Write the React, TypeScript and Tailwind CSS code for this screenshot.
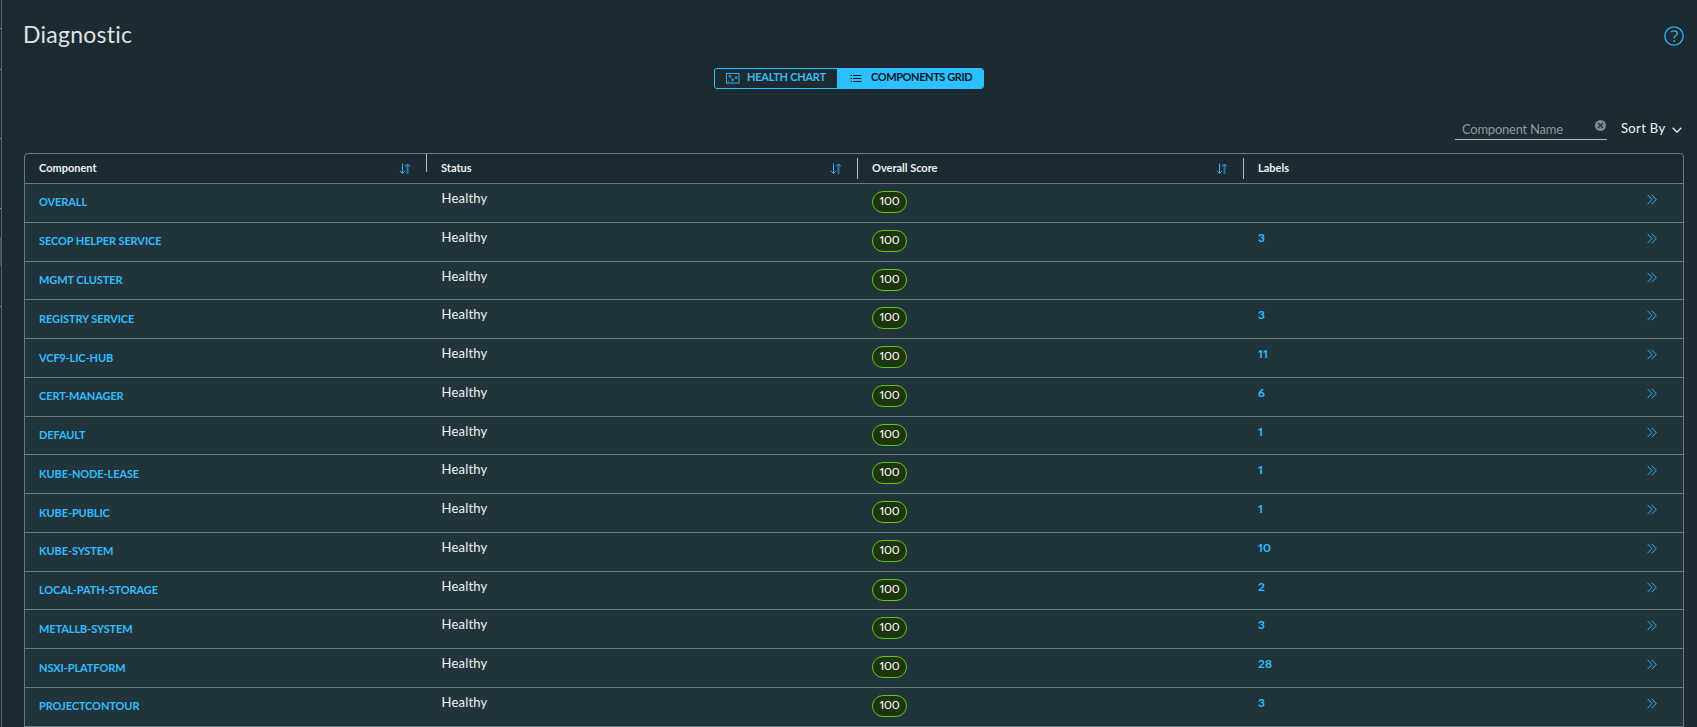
import { useState } from "react";
import clsx from "clsx";

type ComponentRow = {
  name: string;
  status: string;
  score: number;
  labels?: number;
};

const rows: ComponentRow[] = [
  { name: "OVERALL", status: "Healthy", score: 100 },
  { name: "SECOP HELPER SERVICE", status: "Healthy", score: 100, labels: 3 },
  { name: "MGMT CLUSTER", status: "Healthy", score: 100 },
  { name: "REGISTRY SERVICE", status: "Healthy", score: 100, labels: 3 },
  { name: "VCF9-LIC-HUB", status: "Healthy", score: 100, labels: 11 },
  { name: "CERT-MANAGER", status: "Healthy", score: 100, labels: 6 },
  { name: "DEFAULT", status: "Healthy", score: 100, labels: 1 },
  { name: "KUBE-NODE-LEASE", status: "Healthy", score: 100, labels: 1 },
  { name: "KUBE-PUBLIC", status: "Healthy", score: 100, labels: 1 },
  { name: "KUBE-SYSTEM", status: "Healthy", score: 100, labels: 10 },
  { name: "LOCAL-PATH-STORAGE", status: "Healthy", score: 100, labels: 2 },
  { name: "METALLB-SYSTEM", status: "Healthy", score: 100, labels: 3 },
  { name: "NSXI-PLATFORM", status: "Healthy", score: 100, labels: 28 },
  { name: "PROJECTCONTOUR", status: "Healthy", score: 100, labels: 3 },
];

const columns = "grid grid-cols-[401px_431px_386px_1fr]";

function SortIcon() {
  return (
    <svg width="12" height="12" viewBox="0 0 12 12" fill="none" stroke="#2cb5f2" className="mt-[9px] mr-[15px]">
      <path d="M3.5 0.5v10M0.8 7.8L3.5 10.5L6 8" />
      <path d="M8.5 11V2" strokeWidth="2" opacity="0.55" />
      <path d="M6 3.5L8.5 1L11 3.5" />
    </svg>
  );
}

function ChartIcon() {
  return (
    <svg width="14" height="12" viewBox="0 0 14 12" fill="none" stroke="currentColor" strokeWidth="0.9" className="-mt-px">
      <rect x="0.5" y="1.5" width="12.5" height="9.5" />
      <circle cx="3.9" cy="4.3" r="1.1" />
      <circle cx="6.7" cy="8" r="0.9" />
      <circle cx="10.3" cy="5.6" r="1" />
      <path d="M4.9 5.8L5.6 6.6M8.3 7.4L8.9 6.8M2.3 9.2h1" />
    </svg>
  );
}

function ListIcon() {
  return (
    <svg width="12" height="9" viewBox="0 0 12 9" fill="none" stroke="currentColor" strokeWidth="1">
      <path d="M0.5 1.5h1.5M0.5 4.5h1.5M0.5 7.5h1.5M3 1.5h8.5M3 4.5h8.5M3 7.5h8.5" />
    </svg>
  );
}

function HelpIcon() {
  return (
    <svg width="20" height="20" viewBox="0 0 20 20" fill="none" stroke="#2cb5f2">
      <circle cx="10" cy="10" r="9.2" strokeWidth="1.3" />
      <path d="M6.9 6.1c.8-.9 1.9-1.3 3.1-1.3 1.9 0 3.2 1 3.2 2.6 0 1.3-.8 2-1.8 2.6-.9.5-1.3 1-1.3 1.8v.8" strokeWidth="1.3" />
      <circle cx="10.1" cy="15" r="0.9" fill="#2cb5f2" stroke="none" />
    </svg>
  );
}

function HeaderCell({ label, sortable = true, first = false }: { label: string; sortable?: boolean; first?: boolean }) {
  return (
    <div className="flex justify-between">
      <div className="flex">
        {!first && (
          <span className={clsx("w-px bg-[#b3bcc0]", label === "Status" ? "h-[18px]" : "mt-1 h-[21px]")} />
        )}
        <span className="pl-3.5 pt-[5.5px] text-[11px] leading-4 font-bold text-[#eaf0f2]">{label}</span>
      </div>
      {sortable && <SortIcon />}
    </div>
  );
}

// edge of the collapsed navigation panel
function NavEdge() {
  return (
    <div className="flex w-0.5 shrink-0 flex-col border-r border-[#51626a]">
      <span className="mt-7 h-px bg-[#82939b]" />
      <span className="mt-10 h-px bg-[#82939b]" />
      <span className="mt-[68px] h-px bg-[#82939b]" />
      <span className="mt-[69px] h-px bg-[#82939b]" />
      <span className="mt-7 h-[29px] bg-[#43525a]" />
      <span className="mt-10 h-px bg-[#82939b]" />
    </div>
  );
}

export default function App() {
  const [view, setView] = useState("grid");
  const [search, setSearch] = useState("");

  return (
    <div className="flex h-[727px] w-[1697px] overflow-hidden bg-[#1c2b32] font-['Lato','Liberation_Sans',sans-serif] text-white proportional-nums">
      <NavEdge />
      <main className="flex flex-1 flex-col pl-[22px] pr-[13px]">
        <header className="flex h-[68px] shrink-0 justify-between">
          <h1 className="-ml-px pt-5 text-[23px] leading-7 tracking-[0.25px] text-[#dde4e7]">Diagnostic</h1>
          <button className="mt-[26px] h-5">
            <HelpIcon />
          </button>
        </header>

        <div className="ml-[690px] flex h-[21px] w-[270px] shrink-0 overflow-hidden rounded-[3px] border border-[#2cc0ff] text-[11px] leading-4 font-bold">
          <button
            onClick={() => setView("chart")}
            className={clsx(
              "flex w-[122px] items-center pl-[11px]",
              view === "chart" ? "bg-[#2cc0ff] text-black" : "text-[#37bcf8]",
            )}
          >
            <ChartIcon />
            <span className="-mt-[3px] ml-[7px] tracking-[-0.25px] whitespace-nowrap">HEALTH CHART</span>
          </button>
          <button
            onClick={() => setView("grid")}
            className={clsx(
              "flex flex-1 items-center pl-[13px]",
              view === "grid" ? "bg-[#2cc0ff] text-[#041a24]" : "text-[#37bcf8]",
            )}
          >
            <ListIcon />
            <span className="-mt-[3px] ml-[9px] tracking-[-0.4px] whitespace-nowrap">COMPONENTS GRID</span>
          </button>
        </div>

        <div className="flex h-16 shrink-0 justify-end">
          <div className="mt-[27px] flex h-[24px] w-[152px] border-b border-[#adbbc4] pl-[7px]">
            <input
              value={search}
              onChange={(e) => setSearch(e.target.value)}
              placeholder="Component Name"
              className="h-[23px] w-[133px] pt-0.5 text-[13px] tracking-[-0.25px] outline-none placeholder:text-[#8b99a1]"
            />
            <svg width="11" height="11" viewBox="0 0 11 11" className="mt-[4px] shrink-0">
              <circle cx="5.5" cy="5.5" r="5.5" fill="#7c8b92" />
              <path d="M3 3l5 5M8 3l-5 5" stroke="#1c2b32" strokeWidth="1.1" />
            </svg>
          </div>
          <button className="mt-[30px] mr-0.5 ml-3.5 flex h-5 w-[61px] items-center justify-between text-[13px] tracking-[0.35px] whitespace-nowrap text-[#f4f7f8]">
            Sort By
            <svg width="10" height="6" viewBox="0 0 10 6" fill="none" stroke="#e5ebee" strokeWidth="1.3" className="mt-0.5">
              <path d="M0.7 0.8L5 5.2L9.3 0.8" />
            </svg>
          </button>
        </div>

        <section className="w-[1660px] shrink-0 rounded-t-[4px] border border-[#6b7b82]">
          <div className={clsx(columns, "h-[28.97px]")}>
            <HeaderCell label="Component" first />
            <HeaderCell label="Status" />
            <HeaderCell label="Overall Score" />
            <HeaderCell label="Labels" sortable={false} />
          </div>
          {rows.map((row) => (
            <div key={row.name} className={clsx(columns, "h-[38.78px] border-t border-[#6b7b82] bg-[#22343b]")}>
              <a className="pl-3.5 pt-[10.5px] text-[11px] leading-4 font-bold tracking-[-0.1px] text-[#2ebdff]">{row.name}</a>
              <span className="pl-[15.5px] pt-[5px] text-[13px] leading-[18px] tracking-[0.2px] text-[#f0f4f5]">{row.status}</span>
              <div className="pl-[15px] pt-[7px]">
                <span className="flex h-[22px] w-[35px] justify-center rounded-full border border-[#60c818] bg-[#1e340c] pt-px text-[12px] leading-4 tracking-[-0.2px] text-white">
                  {row.score}
                </span>
              </div>
              <div className="flex justify-between pl-[15px] pr-[26px]">
                <span className="pt-[7px] text-[12px] leading-4 font-bold text-[#2ebdff]">{row.labels}</span>
                <svg width="10" height="11" viewBox="0 0 10 11" fill="none" stroke="#2cb5f2" className="mt-2.5">
                  <path d="M0.5 0.8L5 5.5L0.5 10.2M4.7 0.8L9.2 5.5L4.7 10.2" />
                </svg>
              </div>
            </div>
          ))}
        </section>
      </main>
    </div>
  );
}
